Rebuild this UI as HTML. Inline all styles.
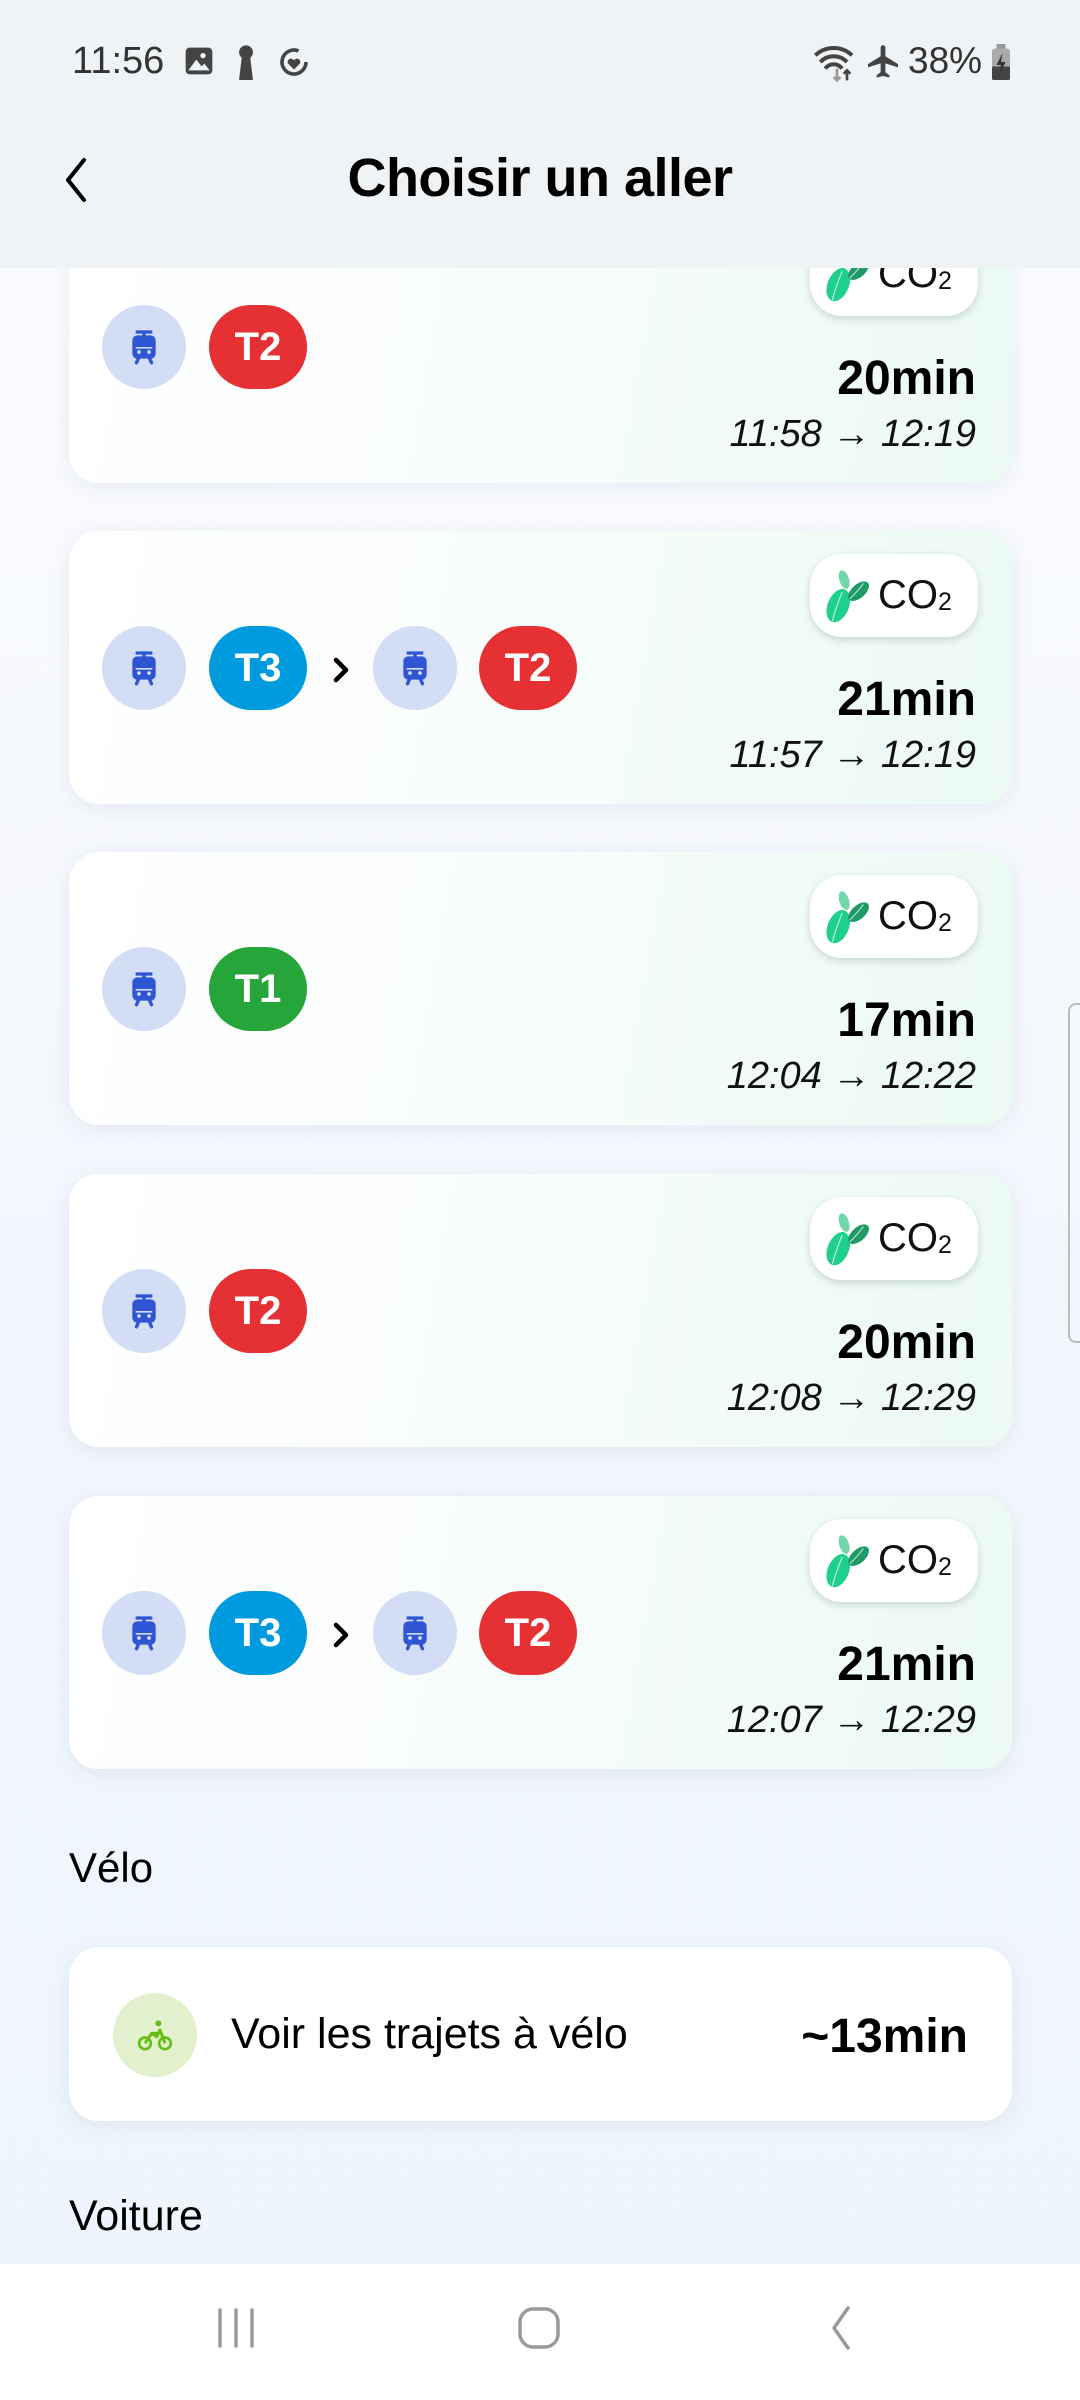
<!DOCTYPE html>
<html><head><meta charset="utf-8"><style>
*{margin:0;padding:0;box-sizing:border-box}
body{width:1080px;height:2400px;position:relative;overflow:hidden;font-family:"Liberation Sans",sans-serif;background:linear-gradient(180deg,#fbfcfe 0%,#f2f6fd 60%,#eef5fe 100%)}
.abs{position:absolute}
.card{position:absolute;left:69px;width:943px;height:273px;border-radius:30px;background:linear-gradient(100deg,#ffffff 0%,#f7fcfa 50%,#ebfaf3 100%);box-shadow:0 4px 22px rgba(30,50,90,0.08)}
.tram{position:absolute;top:95px;width:84px;height:84px;border-radius:50%;background:#d3ddf5;display:flex;align-items:center;justify-content:center}
.pill{position:absolute;top:95px;width:98px;height:84px;border-radius:42px;color:#fff;font-size:40px;font-weight:bold;display:flex;align-items:center;justify-content:center}
.chev{position:absolute;top:124px;left:262px}
.badge{position:absolute;right:34px;top:23px;width:168px;height:83px;border-radius:32px;background:#fff;box-shadow:0 3px 8px rgba(20,60,40,0.18);display:flex;align-items:center;padding-left:12px}
.badge span{font-size:40px;color:#111;margin-left:6px}
.badge sub{font-size:25px;vertical-align:baseline;position:relative;top:2px}
.dur{position:absolute;right:36px;top:141px;font-size:48px;font-weight:bold;color:#000}
.tm{position:absolute;right:36px;top:203px;font-size:38px;font-style:italic;color:#111}
</style></head><body>
<svg width="0" height="0" style="position:absolute"><defs>
<symbol id="tr" viewBox="0 0 24 24"><path d="M7 3h10M12 3v3M8 6h8a2 2 0 0 1 2 2v8a2 2 0 0 1-2 2H8a2 2 0 0 1-2-2V8a2 2 0 0 1 2-2z" fill="none" stroke="#2f55d4" stroke-width="2"/><rect x="6" y="6" width="12" height="6" fill="#2f55d4"/><path d="M6 13h12v3a2 2 0 0 1-2 2H8a2 2 0 0 1-2-2z" fill="#2f55d4"/><circle cx="9" cy="15" r="1.1" fill="#d3ddf5"/><circle cx="15" cy="15" r="1.1" fill="#d3ddf5"/><path d="M9 18l-1.5 3.5M15 18l1.5 3.5" stroke="#2f55d4" stroke-width="2" stroke-linecap="round"/></symbol>
<symbol id="lf" viewBox="0 0 50 60"><ellipse cx="16" cy="40" rx="11" ry="18" transform="rotate(22 16 40)" fill="#1fd08c"/><ellipse cx="22" cy="13" rx="5" ry="10" transform="rotate(-18 22 13)" fill="#72d6ab"/><ellipse cx="37" cy="25" rx="7" ry="13" transform="rotate(48 37 25)" fill="#1e9a66"/><path d="M10 56c2-10 6-20 10-30M28 33c4-4 9-9 14-16" stroke="#fff" stroke-width="1.2" fill="none" opacity=".7"/></symbol>
<symbol id="ch" viewBox="0 0 20 30"><path d="M5 5l10 10-10 10" fill="none" stroke="#000" stroke-width="4.5" stroke-linecap="round" stroke-linejoin="round"/></symbol>
</defs></svg>

<div class="card" style="top:210px">
 <div class="tram" style="left:33px"><svg width="40" height="40"><use href="#tr" width="40" height="40"/></svg></div>
 <div class="pill" style="left:140px;background:#e53133">T2</div>
 <div class="badge"><svg width="50" height="58"><use href="#lf" width="50" height="58"/></svg><span>CO<sub>2</sub></span></div>
 <div class="dur">20min</div><div class="tm">11:58 → 12:19</div>
</div>
<div class="card" style="top:531px">
 <div class="tram" style="left:33px"><svg width="40" height="40"><use href="#tr" width="40" height="40"/></svg></div>
 <div class="pill" style="left:140px;background:#009bdf">T3</div>
 <svg class="chev" width="20" height="30"><use href="#ch" width="20" height="30"/></svg>
 <div class="tram" style="left:304px"><svg width="40" height="40"><use href="#tr" width="40" height="40"/></svg></div>
 <div class="pill" style="left:410px;background:#e53133">T2</div>
 <div class="badge"><svg width="50" height="58"><use href="#lf" width="50" height="58"/></svg><span>CO<sub>2</sub></span></div>
 <div class="dur">21min</div><div class="tm">11:57 → 12:19</div>
</div>
<div class="card" style="top:852px">
 <div class="tram" style="left:33px"><svg width="40" height="40"><use href="#tr" width="40" height="40"/></svg></div>
 <div class="pill" style="left:140px;background:#25a53a">T1</div>
 <div class="badge"><svg width="50" height="58"><use href="#lf" width="50" height="58"/></svg><span>CO<sub>2</sub></span></div>
 <div class="dur">17min</div><div class="tm">12:04 → 12:22</div>
</div>
<div class="card" style="top:1174px">
 <div class="tram" style="left:33px"><svg width="40" height="40"><use href="#tr" width="40" height="40"/></svg></div>
 <div class="pill" style="left:140px;background:#e53133">T2</div>
 <div class="badge"><svg width="50" height="58"><use href="#lf" width="50" height="58"/></svg><span>CO<sub>2</sub></span></div>
 <div class="dur">20min</div><div class="tm">12:08 → 12:29</div>
</div>
<div class="card" style="top:1496px">
 <div class="tram" style="left:33px"><svg width="40" height="40"><use href="#tr" width="40" height="40"/></svg></div>
 <div class="pill" style="left:140px;background:#009bdf">T3</div>
 <svg class="chev" width="20" height="30"><use href="#ch" width="20" height="30"/></svg>
 <div class="tram" style="left:304px"><svg width="40" height="40"><use href="#tr" width="40" height="40"/></svg></div>
 <div class="pill" style="left:410px;background:#e53133">T2</div>
 <div class="badge"><svg width="50" height="58"><use href="#lf" width="50" height="58"/></svg><span>CO<sub>2</sub></span></div>
 <div class="dur">21min</div><div class="tm">12:07 → 12:29</div>
</div>

<div class="abs" style="left:69px;top:1844px;font-size:42px;color:#000">Vélo</div>
<div class="abs" style="left:69px;top:1947px;width:943px;height:174px;border-radius:30px;background:#fff;box-shadow:0 4px 22px rgba(30,50,90,0.08)">
 <div class="abs" style="left:44px;top:46px;width:84px;height:84px;border-radius:50%;background:#e2f0cd;display:flex;align-items:center;justify-content:center">
  <svg width="40" height="40" viewBox="0 0 24 24"><circle cx="6" cy="17" r="3.5" fill="none" stroke="#66bf14" stroke-width="1.6"/><circle cx="18" cy="17" r="3.5" fill="none" stroke="#66bf14" stroke-width="1.6"/><circle cx="14" cy="5" r="1.8" fill="#66bf14"/><path d="M6 17l4-6 3 2 2-4 3 8M10 11h4" fill="none" stroke="#66bf14" stroke-width="1.8" stroke-linejoin="round"/></svg>
 </div>
 <div class="abs" style="left:162px;top:63px;font-size:43px;color:#000">Voir les trajets à vélo</div>
 <div class="abs" style="right:44px;top:62px;font-size:48px;font-weight:bold;color:#000">~13min</div>
</div>
<div class="abs" style="left:69px;top:2192px;font-size:43px;color:#000">Voiture</div>

<div class="abs" style="left:1068px;top:1003px;width:14px;height:340px;border:2px solid #bbb;border-right:none;border-radius:8px 0 0 8px"></div>

<div class="abs" style="left:0;top:0;width:1080px;height:268px;background:#eff3f6"></div>
<div class="abs" style="left:72px;top:40px;font-size:38px;color:#333">11:56</div>
<svg class="abs" style="left:183px;top:45px" width="32" height="32" viewBox="0 0 24 24"><rect x="2" y="2" width="20" height="20" rx="3" fill="#444"/><circle cx="15" cy="8" r="2" fill="#eff3f6"/><path d="M4 19l6-8 4 5 2-2 4 5z" fill="#eff3f6"/></svg>
<svg class="abs" style="left:232px;top:44px" width="28" height="36" viewBox="0 0 20 26"><circle cx="10" cy="6" r="5" fill="#444"/><path d="M7 9h6l2 17H5z" fill="#444"/></svg>
<svg class="abs" style="left:276px;top:44px" width="36" height="36" viewBox="0 0 24 24"><path d="M20 12a8 8 0 1 1-5-7.4" fill="none" stroke="#444" stroke-width="2.4"/><path d="M12 17l-4-4a2.2 2.2 0 0 1 4-2 2.2 2.2 0 0 1 4 2z" fill="#444"/></svg>
<svg class="abs" style="left:812px;top:42px" width="50" height="40" viewBox="0 0 30 24"><path d="M2 8a16 16 0 0 1 22 0M5 12a11 11 0 0 1 16 0M8 16a6 6 0 0 1 10 0" fill="none" stroke="#444" stroke-width="2.4"/><path d="M15 16v7M13 21l2 2 2-2" stroke="#999" stroke-width="1.6" fill="none"/><path d="M21 23v-6M19 19l2-2 2 2" stroke="#444" stroke-width="1.6" fill="none"/></svg>
<svg class="abs" style="left:864px;top:42px" width="38" height="38" viewBox="0 0 24 24"><path d="M12 2c1 0 1.5 1 1.5 2v5l8 5v2l-8-2.5V19l2.5 2v1.5L12 21.5 8 22.5V21l2.5-2v-5.5L2.5 16v-2l8-5V4c0-1 .5-2 1.5-2z" fill="#444"/></svg>
<div class="abs" style="left:908px;top:40px;font-size:37px;color:#333">38%</div>
<svg class="abs" style="left:990px;top:44px" width="22" height="36" viewBox="0 0 14 24"><rect x="4" y="0" width="6" height="3" fill="#999"/><rect x="1" y="3" width="12" height="21" rx="2" fill="#aaa"/><rect x="1" y="15" width="12" height="9" rx="1" fill="#444"/><path d="M8 6l-4 8h3l-1 7 4-9H7z" fill="#333"/></svg>
<svg class="abs" style="left:62px;top:156px" width="30" height="48" viewBox="0 0 30 48"><path d="M22 4L6 24l16 20" fill="none" stroke="#000" stroke-width="4" stroke-linecap="round" stroke-linejoin="round"/></svg>
<div class="abs" style="left:0;width:1080px;top:147px;text-align:center;font-size:54px;font-weight:bold;color:#000;letter-spacing:-0.5px">Choisir un aller</div>

<div class="abs" style="left:0;top:2264px;width:1080px;height:136px;background:#fff"></div>
<svg class="abs" style="left:214px;top:2308px" width="48" height="40"><path d="M6 2v36M22 2v36M38 2v36" stroke="#9a9a9a" stroke-width="3.5" stroke-linecap="round"/></svg>
<svg class="abs" style="left:516px;top:2306px" width="48" height="44"><rect x="4" y="3" width="38" height="38" rx="13" fill="none" stroke="#9a9a9a" stroke-width="3.5"/></svg>
<svg class="abs" style="left:826px;top:2304px" width="30" height="48"><path d="M22 4L8 24l14 20" fill="none" stroke="#9a9a9a" stroke-width="3.5" stroke-linecap="round" stroke-linejoin="round"/></svg>
</body></html>
